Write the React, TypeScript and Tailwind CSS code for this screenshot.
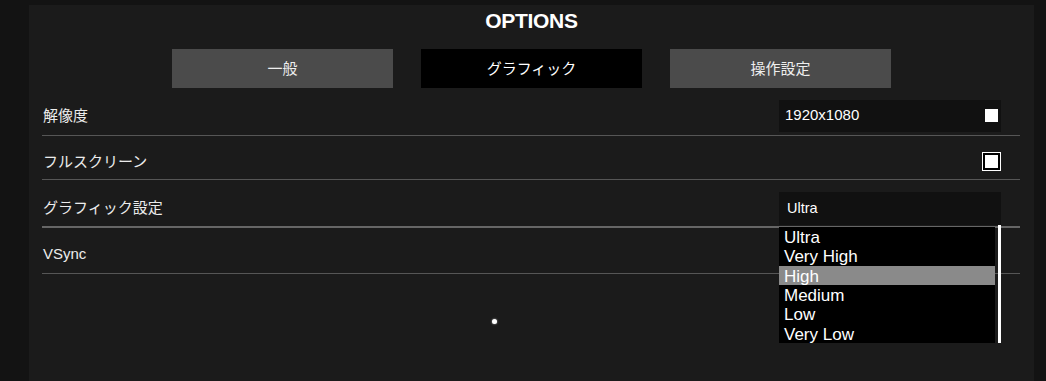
import { useState } from 'react';

const tabs = ['一般', 'グラフィック', '操作設定'];
const qualities = ['Ultra', 'Very High', 'High', 'Medium', 'Low', 'Very Low'];

function App() {
  const [tab] = useState(1);
  const [hover] = useState(2);

  return (
    <div className="relative w-[1046px] h-[381px] overflow-hidden bg-[#131313] pt-[5px] pl-[29px] pr-[12px] font-['Liberation_Sans','Noto_Sans_CJK_JP',sans-serif] text-[#ececec]">
      <div className="h-full bg-[#1b1b1b]">
        {/* title */}
        <div className="h-[44px] pt-[4px] text-center">
          <h1 className="text-[21px] leading-[24px] font-bold text-white tracking-[-0.3px]">OPTIONS</h1>
        </div>

        {/* tabs */}
        <div className="flex justify-center gap-[28px] h-[39px]">
          {tabs.map((t, i) => (
            <div
              key={t}
              className={
                'w-[221px] flex items-center justify-center text-[15px] font-["Noto_Sans_CJK_JP",sans-serif] ' +
                (i === tab ? 'bg-black text-white' : 'bg-[#4b4b4b] text-[#eeeeee]')
              }
            >
              {t}
            </div>
          ))}
        </div>

        {/* settings */}
        <div className="pl-[13px] pr-[14px] text-[15px]">
          <div className="h-[48px] pt-[9px] flex items-center justify-between border-b border-[#565656]">
            <span className="pl-[1px]">解像度</span>
            <div className="w-[222px] h-[32px] mr-[19px] -mt-[1px] bg-[#111111] flex items-center justify-between pl-[6px] pr-[3px]">
              <span className="text-white">1920x1080</span>
              <span className="w-[13px] h-[13px] bg-white" />
            </div>
          </div>

          <div className="h-[44px] pt-[9px] flex items-center justify-between border-b border-[#565656]">
            <span className="pl-[1px]">フルスクリーン</span>
            <div className="w-[19px] h-[19px] mr-[19px] -mt-[1px] border border-white bg-black p-[2px]">
              <div className="w-full h-full bg-white" />
            </div>
          </div>

          <div className="h-[48px] pt-[11px] flex items-center justify-between border-b-2 border-[#666666]">
            <span className="pl-[1px]">グラフィック設定</span>
            <div className="relative w-[222px] h-[33px] mr-[19px] bg-[#111111] flex items-center pl-[8px]">
              <span className="text-white text-[14.5px]">Ultra</span>
              <ul className="absolute z-10 left-0 top-[35px] w-[216px] h-[116px] bg-black text-[17px] leading-[19.33px] text-white">
                {qualities.map((q, i) => (
                  <li key={q} className={'pl-[5px] pt-[1px] h-[19.33px] ' + (i === hover ? 'bg-[#8a8a8a]' : '')}>
                    {q}
                  </li>
                ))}
              </ul>
              <div className="absolute z-10 left-[219px] top-[33px] w-[3px] h-[118px] bg-white" />
            </div>
          </div>

          <div className="h-[46px] pt-2 flex items-center border-b border-[#565656]">
            <span className="pl-[1px]">VSync</span>
          </div>
        </div>
      </div>

      {/* cursor dot */}
      <div className="absolute left-[492px] top-[319px] w-[5px] h-[5px] rounded-full bg-white shadow-[0_0_2px_rgba(255,255,255,0.7)]" />
    </div>
  );
}

export default App;
